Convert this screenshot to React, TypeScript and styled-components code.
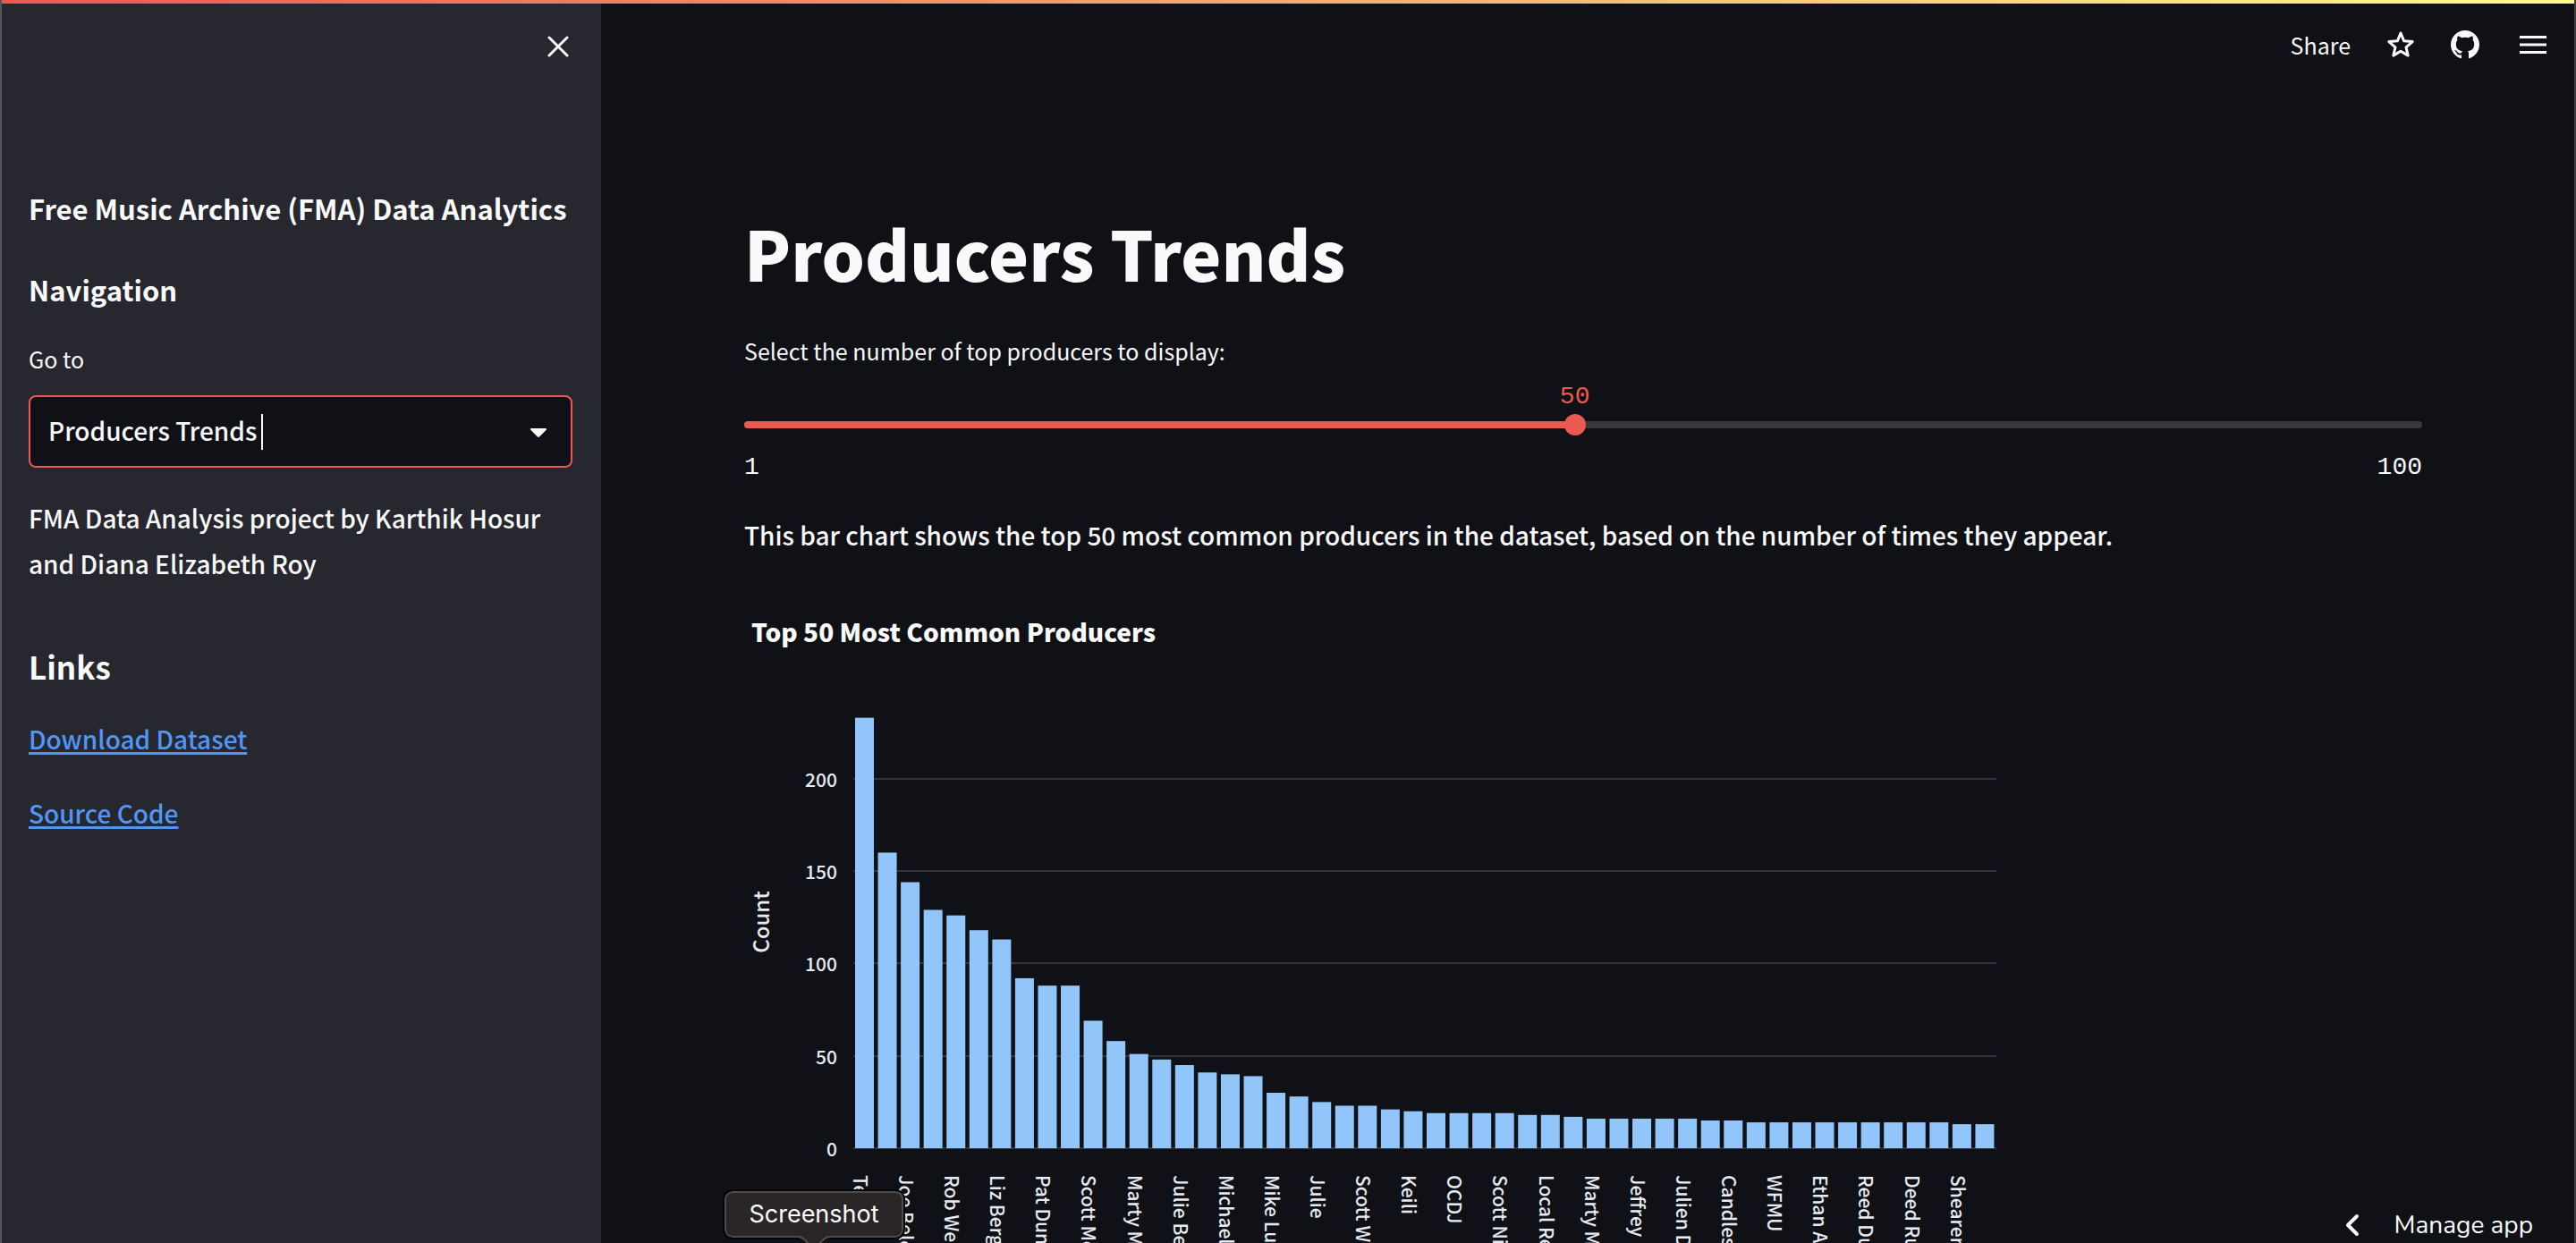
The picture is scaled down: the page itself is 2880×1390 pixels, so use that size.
import React, { useState } from "react";
import styled, { createGlobalStyle } from "styled-components";

const sans = '"Source Sans Pro", "Noto Sans CJK SC", "Noto Sans", sans-serif';
const mono = '"Liberation Mono", monospace';
const color = {
  bg: "#101116",
  panel: "#272730",
  text: "#fafafa",
  axis: "#e6eaf1",
  grid: "#31333f",
  track: "#38393f",
  accent: "#ec5953",
  link: "#5196f4",
  bar: "#92c5f9",
};

const GlobalStyle = createGlobalStyle`
  *, *::before, *::after { box-sizing: border-box; }
  body { margin: 0; background: ${color.bg}; color: ${color.text}; font-family: ${sans}; }
  button { border: 0; padding: 0; background: none; color: inherit; font: inherit; cursor: pointer; }
  h1, h2, h3, p { margin: 0; }
`;

const Shell = styled.div`
  position: relative;
  display: flex;
  height: 100vh;
  overflow: hidden;
  border-left: 2px solid #55565b;
  border-right: 2px solid #3d3e42;
`;

const Decoration = styled.div`
  position: absolute;
  z-index: 2;
  top: 0;
  left: -2px;
  right: -2px;
  height: 4px;
  background: linear-gradient(90deg, #ec5953, #fdfc8b);
`;

const Sidebar = styled.aside`
  display: flex;
  flex: none;
  flex-direction: column;
  width: 670px;
  padding: 0 32px 0 30px;
  background: ${color.panel};
`;

const SidebarTop = styled.div`
  display: flex;
  align-items: center;
  justify-content: flex-end;
  height: 104px;
  margin-bottom: 107px;
`;

const IconButton = styled.button<{ $width?: number }>`
  display: flex;
  align-items: center;
  justify-content: center;
  width: ${(p) => p.$width ?? 32}px;
  height: 32px;
`;

const SideTitle = styled.h3`
  margin-bottom: 48px;
  font-size: 31px;
  line-height: 43px;
  font-weight: 700;
  white-space: nowrap;
`;

const Navigation = styled(SideTitle)`
  margin-bottom: 36px;
`;

const FieldLabel = styled.label`
  display: block;
  font-size: 25px;
  line-height: 40px;
`;

const SelectBox = styled.div`
  position: relative;
  margin: 21px 0 31px;
`;

const Select = styled.select`
  display: block;
  width: 100%;
  height: 81px;
  padding: 0 20px 4px;
  appearance: none;
  border: 2px solid ${color.accent};
  border-radius: 8px;
  outline: 0;
  background: ${color.bg};
  color: ${color.text};
  font-family: ${sans};
  font-size: 28px;
  font-weight: 500;
`;

const TextCaret = styled.span`
  position: absolute;
  top: 21px;
  left: 260px;
  width: 2px;
  height: 40px;
  background: ${color.text};
`;

const SelectArrow = styled.svg`
  position: absolute;
  top: 36px;
  right: 28px;
  pointer-events: none;
`;

const Text = styled.p`
  font-size: 28px;
  line-height: 51px;
  font-weight: 500;
`;

const LinksTitle = styled.h2`
  margin: 68px 0 35px;
  font-size: 35px;
  line-height: 42px;
  font-weight: 700;
`;

const LinkList = styled.nav`
  display: flex;
  flex-direction: column;
  align-items: flex-start;
  gap: 32px;
`;

const Link = styled.a`
  color: ${color.link};
  font-size: 28px;
  line-height: 51px;
  font-weight: 500;
  text-decoration: underline;
  text-decoration-thickness: 3px;
  text-underline-offset: 3px;
  text-decoration-skip-ink: none;
`;

const Main = styled.main`
  flex: 1;
  min-width: 0;
`;

const Toolbar = styled.header`
  display: flex;
  align-items: center;
  justify-content: flex-end;
  gap: 40px;
  height: 100px;
  padding-right: 26px;
`;

const ShareButton = styled.button`
  font-size: 25px;
  line-height: 40px;
`;

const Content = styled.div`
  padding: 134px 170px 0 160px;
`;

const Title = styled.h1`
  margin-bottom: 42px;
  font-size: 76px;
  line-height: 96px;
  font-weight: 900;
`;

const Slider = styled.div`
  position: relative;
  padding-top: 51px;
  margin-bottom: 30px;
`;

const SliderValue = styled.output`
  position: absolute;
  top: 12px;
  transform: translateX(-50%);
  color: ${color.accent};
  font-family: ${mono};
  font-size: 28px;
  line-height: 40px;
`;

const Range = styled.input`
  display: block;
  width: 100%;
  height: 24px;
  margin: 0 0 16px;
  appearance: none;
  background: none;

  &::-webkit-slider-runnable-track {
    height: 8px;
    border-radius: 4px;
    background: linear-gradient(
      90deg,
      ${color.accent} var(--fill),
      ${color.track} var(--fill)
    );
  }

  &::-webkit-slider-thumb {
    width: 24px;
    height: 24px;
    margin-top: -8px;
    appearance: none;
    border-radius: 50%;
    background: ${color.accent};
  }
`;

const Ticks = styled.div`
  display: flex;
  justify-content: space-between;
  font-family: ${mono};
  font-size: 28px;
  line-height: 40px;
`;

const Chart = styled.svg`
  display: block;
  margin-top: 31px;
  font-family: ${sans};
  font-weight: 500;
`;

const ManageApp = styled.button`
  position: absolute;
  right: 46px;
  bottom: 0;
  display: flex;
  align-items: center;
  gap: 38px;
  height: 40px;
  font-family: Nunito, Lato, sans-serif;
  font-size: 28px;
  line-height: 40px;
`;

const Tooltip = styled.div`
  position: absolute;
  bottom: 6px;
  left: 808px;
  width: 200px;
  height: 52px;
  border: 2px solid #4e4b4c;
  border-radius: 9px;
  outline: 2px solid #050506;
  background: #2a2627;
  color: #fff;
  font-family: Inter, sans-serif;
  font-size: 27px;
  line-height: 47px;
  text-align: center;
`;

const TooltipTip = styled.svg`
  position: absolute;
  top: 48px;
  left: 76px;
`;

const producers: [string, number][] = [
  ["Terre T", 233], ["", 160], ["Joe Belock", 144], ["", 129], ["Rob Weisberg", 126],
  ["", 118], ["Liz Berg", 113], ["", 92], ["Pat Duncan", 88], ["", 88],
  ["Scott McDowell", 69], ["", 58], ["Marty McSorley", 51], ["", 48], ["Julie Bee", 45],
  ["", 41], ["Michael", 40], ["", 39], ["Mike Lupica", 30], ["", 28],
  ["Julie", 25], ["", 23], ["Scott Williams", 23], ["", 21], ["Keili", 20],
  ["", 19], ["OCDJ", 19], ["", 19], ["Scott Nichols", 19], ["", 18],
  ["Local Reed", 18], ["", 17], ["Marty M", 16], ["", 16], ["Jeffrey D", 16],
  ["", 16], ["Julien D", 16], ["", 15], ["Candless", 15], ["", 14],
  ["WFMU", 14], ["", 14], ["Ethan A", 14], ["", 14], ["Reed Dunlea", 14],
  ["", 14], ["Deed Runlea", 14], ["", 14], ["Shearer", 13], ["", 13],
];

const plot = { left: 122, right: 1400, zero: 629, unit: 2.066 };
const step = (plot.right - plot.left) / producers.length;

function ProducersChart() {
  return (
    <Chart width="1420" height="900" role="img" aria-label="Top 50 Most Common Producers">
      <text x="8" y="63" fontSize="28" fontWeight="900" fill={color.text}>
        Top 50 Most Common Producers
      </text>
      {[0, 50, 100, 150, 200].map((n) => {
        const y = Math.round(plot.zero - n * plot.unit);
        return (
          <g key={n}>
            <rect x={plot.left} y={y - 1} width={plot.right - plot.left} height="2" fill={color.grid} />
            <text x="104" y={y + 9} fontSize="21" textAnchor="end" fill={color.axis}>
              {n}
            </text>
          </g>
        );
      })}
      <text transform="translate(28 376) rotate(-90)" fontSize="24" textAnchor="middle" fill={color.axis}>
        Count
      </text>
      {producers.map(([name, count], i) => {
        const x = plot.left + i * step;
        const h = count * plot.unit;
        return (
          <g key={i}>
            <rect x={x + 2} y={plot.zero - h} width="21" height={h} fill={color.bar} />
            {name && (
              <text transform={`translate(${x + step / 2 - 13} 659) rotate(90)`} fontSize="21" fill={color.axis}>
                {name}
              </text>
            )}
          </g>
        );
      })}
    </Chart>
  );
}

const MIN = 1;
const MAX = 100;

export default function App() {
  const [count, setCount] = useState(50);
  const ratio = (count - MIN) / (MAX - MIN);
  const position = `calc(12px + (100% - 24px) * ${ratio})`;

  return (
    <>
      <GlobalStyle />
      <Shell>
        <Decoration />
        <Sidebar>
          <SidebarTop>
            <IconButton aria-label="Close sidebar">
              <svg width="24" height="24" viewBox="0 0 24 24" stroke="currentColor" strokeWidth="3" strokeLinecap="round">
                <path d="M2 2l20 20M22 2L2 22" />
              </svg>
            </IconButton>
          </SidebarTop>
          <SideTitle>Free Music Archive (FMA) Data Analytics</SideTitle>
          <Navigation>Navigation</Navigation>
          <FieldLabel htmlFor="page">Go to</FieldLabel>
          <SelectBox>
            <Select id="page" defaultValue="producers">
              <option value="producers">Producers Trends</option>
            </Select>
            <TextCaret />
            <SelectArrow width="20" height="12" viewBox="0 0 20 12" fill="currentColor">
              <path d="M2 1h16c1 0 1.400 1 .7 1.700l-7.700 7.800c-.6.600-1.400.600-2 0L1.300 2.700C.6 2 1 1 2 1z" />
            </SelectArrow>
          </SelectBox>
          <Text>FMA Data Analysis project by Karthik Hosur and Diana Elizabeth Roy</Text>
          <LinksTitle>Links</LinksTitle>
          <LinkList>
            <Link href="#dataset">Download Dataset</Link>
            <Link href="#source">Source Code</Link>
          </LinkList>
        </Sidebar>
        <Main>
          <Toolbar>
            <ShareButton>Share</ShareButton>
            <IconButton aria-label="Star">
              <svg width="32" height="32" viewBox="0 0 32 32" fill="none" stroke="currentColor" strokeWidth="3" strokeLinejoin="round">
                <path d="M16 3l3.700 8.800 9.500.8-7.200 6.200 2.200 9.300L16 23.200l-8.200 4.900L10 18.800l-7.200-6.200 9.500-.8z" />
              </svg>
            </IconButton>
            <IconButton aria-label="View source on GitHub">
              <svg width="32" height="32" viewBox="0 0 16 16" fill="currentColor">
                <path d="M8 0C3.580 0 0 3.580 0 8c0 3.540 2.290 6.530 5.470 7.590.4.070.55-.17.55-.38 0-.19-.01-.82-.01-1.490-2.010.37-2.530-.49-2.690-.94-.09-.23-.48-.94-.82-1.130-.28-.15-.68-.52-.01-.53.63-.01 1.080.58 1.230.82.72 1.210 1.870.87 2.330.66.07-.52.28-.87.51-1.070-1.780-.2-3.640-.89-3.640-3.950 0-.87.31-1.590.82-2.150-.08-.2-.36-1.020.08-2.120 0 0 .67-.21 2.200.82.64-.18 1.320-.27 2-.27s1.360.09 2 .27c1.530-1.040 2.200-.82 2.200-.82.44 1.100.16 1.920.08 2.120.51.56.82 1.270.82 2.150 0 3.070-1.870 3.750-3.650 3.950.29.25.54.73.54 1.480 0 1.070-.01 1.930-.01 2.200 0 .21.15.46.55.38A8.010 8.010 0 0 0 16 8c0-4.420-3.580-8-8-8z" />
              </svg>
            </IconButton>
            <IconButton aria-label="Menu" $width={40}>
              <svg width="30" height="20" viewBox="0 0 30 20" fill="currentColor">
                <path d="M0 0h30v3H0zM0 8.500h30v3H0zM0 17h30v3H0z" />
              </svg>
            </IconButton>
          </Toolbar>
          <Content>
            <Title>Producers Trends</Title>
            <FieldLabel htmlFor="count">Select the number of top producers to display:</FieldLabel>
            <Slider>
              <SliderValue htmlFor="count" style={{ left: position }}>{count}</SliderValue>
              <Range
                id="count"
                type="range"
                min={MIN}
                max={MAX}
                value={count}
                onChange={(e) => setCount(Number(e.target.value))}
                style={{ "--fill": position } as React.CSSProperties}
              />
              <Ticks>
                <span>{MIN}</span>
                <span>{MAX}</span>
              </Ticks>
            </Slider>
            <Text>
              This bar chart shows the top {count} most common producers in the dataset, based on the number of times
              they appear.
            </Text>
            <ProducersChart />
          </Content>
        </Main>
        <ManageApp>
          <svg width="16" height="26" viewBox="0 0 16 26" fill="none" stroke="currentColor" strokeWidth="4" strokeLinecap="round" strokeLinejoin="round">
            <path d="M13 3L3 13l10 10" />
          </svg>
          Manage app
        </ManageApp>
        <Tooltip role="tooltip">
          Screenshot
          <TooltipTip width="44" height="8" viewBox="0 0 44 8">
            <path d="M4 0h36c-5 0-8 3-12 8H16C12 3 9 0 4 0z" fill="#2a2627" />
            <path d="M4 1c5 0 8 3 12 8M40 1c-5 0-8 3-12 8" fill="none" stroke="#4e4b4c" strokeWidth="2" />
          </TooltipTip>
        </Tooltip>
      </Shell>
    </>
  );
}
